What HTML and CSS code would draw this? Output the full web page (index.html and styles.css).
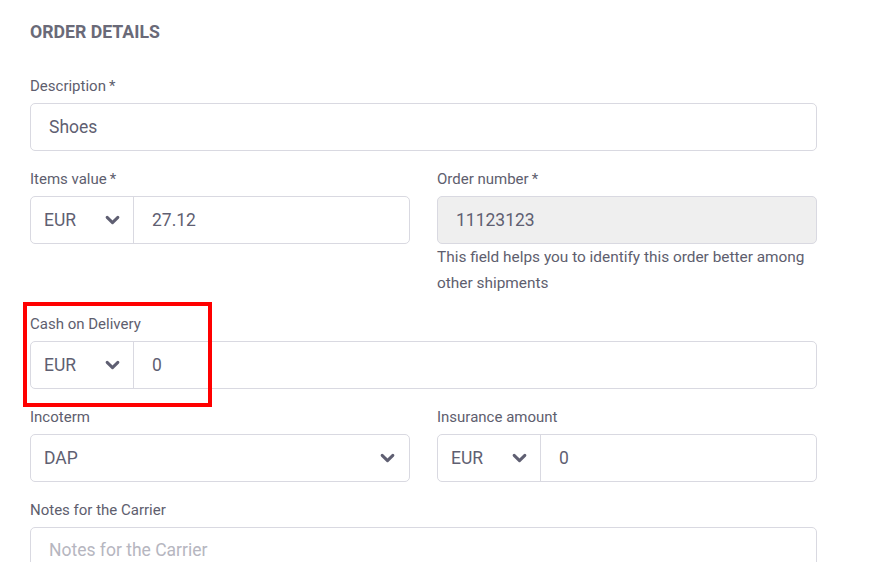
FILE: index.html
```html
<!DOCTYPE html>
<html>
<head>
<meta charset="utf-8">
<link rel="stylesheet" href="styles.css">
</head>
<body>
<div class="page">
  <h2 class="title">ORDER DETAILS</h2>

  <div class="field">
    <label class="label">Description<span class="req">*</span></label>
    <div class="input"><span class="val">Shoes</span></div>
  </div>

  <div class="row">
    <div class="col">
      <div class="field">
        <label class="label">Items value<span class="req">*</span></label>
        <div class="input money">
          <div class="cur"><span>EUR</span><svg class="chev" viewBox="0 0 14 9"><path d="M2 2l5 5 5-5"/></svg></div>
          <span class="val amt">27.12</span>
        </div>
      </div>
    </div>
    <div class="col">
      <div class="field">
        <label class="label">Order number<span class="req">*</span></label>
        <div class="input disabled"><span class="val">11123123</span></div>
        <p class="help">This field helps you to identify this order better among other shipments</p>
      </div>
    </div>
  </div>

  <div class="field cod">
    <div class="highlight"></div>
    <label class="label">Cash on Delivery</label>
    <div class="input money">
      <div class="cur"><span>EUR</span><svg class="chev" viewBox="0 0 14 9"><path d="M2 2l5 5 5-5"/></svg></div>
      <span class="val amt">0</span>
    </div>
  </div>

  <div class="row">
    <div class="col">
      <div class="field">
        <label class="label">Incoterm</label>
        <div class="input select"><span class="val sel">DAP</span><svg class="chev" viewBox="0 0 14 9"><path d="M2 2l5 5 5-5"/></svg></div>
      </div>
    </div>
    <div class="col">
      <div class="field">
        <label class="label">Insurance amount</label>
        <div class="input money">
          <div class="cur"><span>EUR</span><svg class="chev" viewBox="0 0 14 9"><path d="M2 2l5 5 5-5"/></svg></div>
          <span class="val amt">0</span>
        </div>
      </div>
    </div>
  </div>

  <div class="field">
    <label class="label">Notes for the Carrier</label>
    <div class="input textarea"><span class="val ph">Notes for the Carrier</span></div>
  </div>
</div>
</body>
</html>
```

FILE: styles.css
```css
html, body {
  margin: 0;
  padding: 0;
  background: #ffffff;
  font-family: Roboto, "Liberation Sans", sans-serif;
  overflow: hidden;
}
.page {
  width: 787px;
  padding: 22px 0 0 30px;
}
.title {
  margin: 0 0 34px 0;
  font-size: 17.7px;
  line-height: 20px;
  font-weight: 700;
  color: #6a6a78;
}
.field {
  margin-bottom: 18px;
  position: relative;
}
.label {
  display: block;
  font-size: 15px;
  line-height: 20px;
  color: #5e5e6e;
  margin-bottom: 7px;
}
.req {
  margin-left: 3px;
}
.input {
  box-sizing: border-box;
  height: 48px;
  border: 1px solid #d9d9e1;
  border-radius: 5px;
  background: #fff;
  display: flex;
  align-items: center;
  padding: 0 18px;
  font-size: 17.5px;
  color: #5f5f72;
}
.input.disabled {
  background: #efefef;
}
.row {
  display: flex;
  gap: 27px;
}
.col {
  flex: 1;
  min-width: 0;
}
.help {
  margin: 0;
  font-size: 15.4px;
  line-height: 26px;
  color: #5e5e6e;
}
.money {
  padding: 0;
}
.cur {
  width: 103px;
  height: 100%;
  border-right: 1px solid #d9d9e1;
  display: flex;
  align-items: center;
  justify-content: space-between;
  padding: 0 13px 0 13px;
  box-sizing: border-box;
  flex: none;
}
.amt {
  padding-left: 18px;
}
.chev {
  width: 15px;
  height: 10px;
  fill: none;
  stroke: #5f5f72;
  stroke-width: 2.8;
  stroke-linecap: round;
  stroke-linejoin: round;
}
.select {
  justify-content: space-between;
  padding: 0 14px 0 13px;
}
.textarea {
  height: 60px;
  align-items: flex-start;
  padding-top: 12px;
}
.ph {
  color: #b6b6c0;
}
.highlight {
  position: absolute;
  left: -7px;
  top: -12px;
  width: 189px;
  height: 105px;
  box-sizing: border-box;
  border: 4px solid #ff0000;
  pointer-events: none;
}
```
